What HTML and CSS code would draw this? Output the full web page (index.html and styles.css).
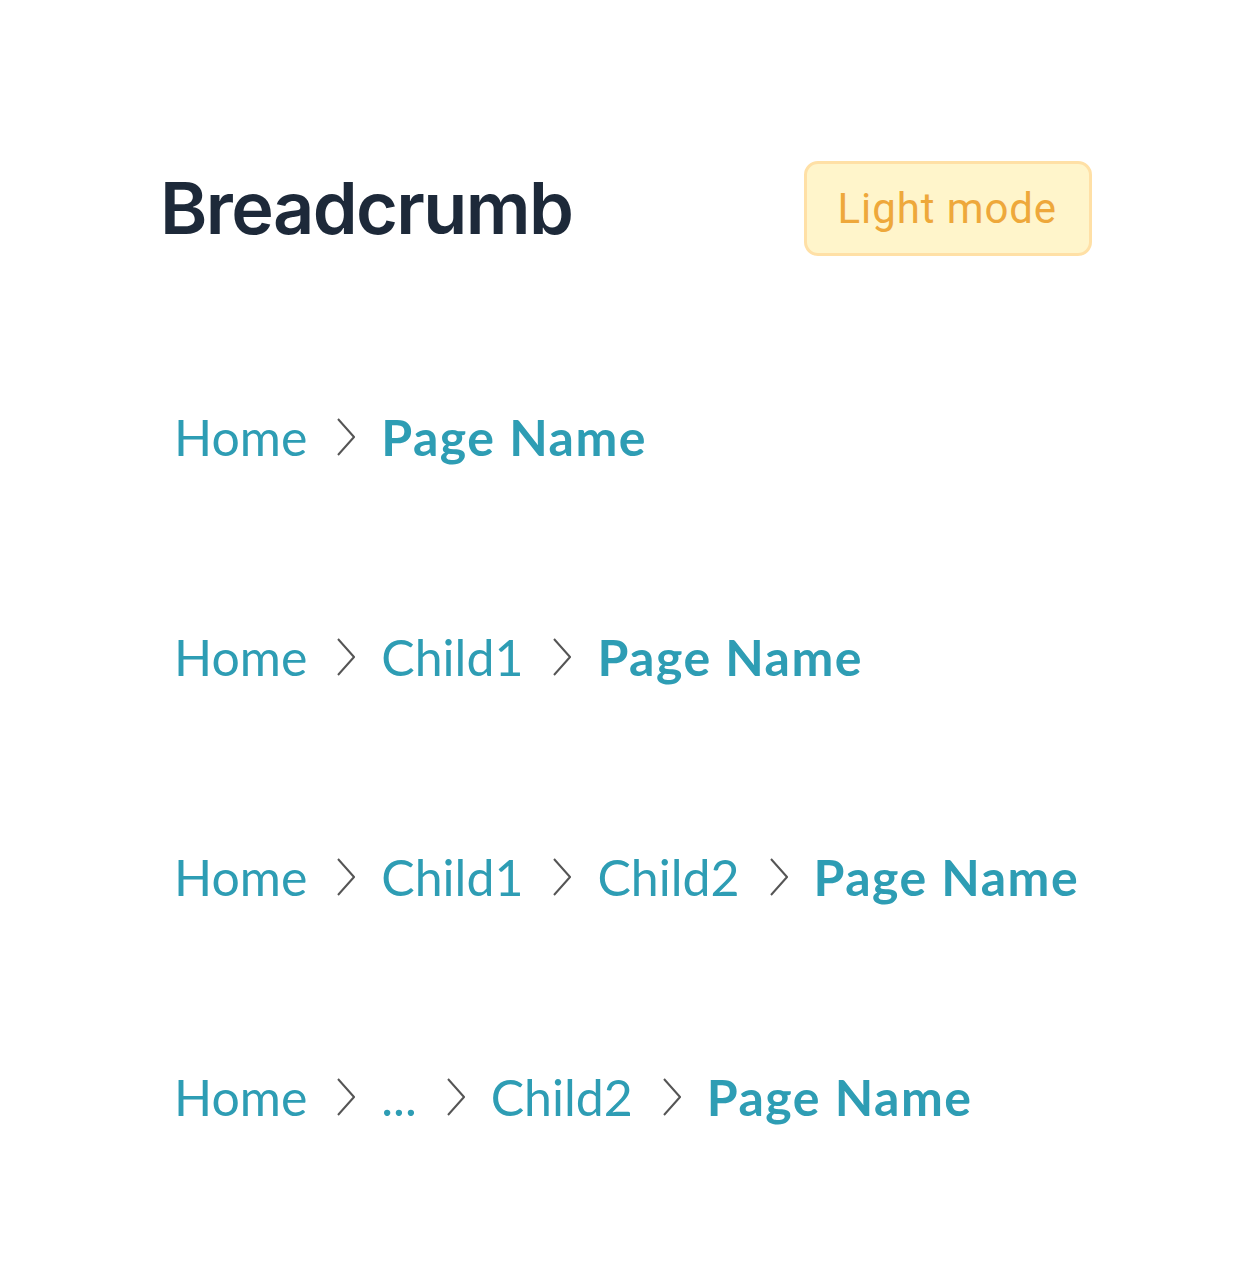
FILE: index.html
```html
<!DOCTYPE html>
<html lang="en">
<head>
	<meta charset="UTF-8">
	<title>Breadcrumb</title>
	<link rel="stylesheet" href="styles.css">
</head>
<body>
	<div class="page">
		<div class="header">
			<h1 class="header_title">Breadcrumb</h1>
			<a href="javascript:;" class="header_mode">Light mode</a>
		</div>

		<div class="crumbs">
			<div class="crumb_row">
				<a href="javascript:;" class="crumb_link">Home</a>
				<span class="crumb_sep"><svg viewBox="0 0 18 38"><path d="M1 1 L17 19 L1 37"/></svg></span>
				<span class="crumb_current">Page Name</span>
			</div>

			<div class="crumb_row">
				<a href="javascript:;" class="crumb_link">Home</a>
				<span class="crumb_sep"><svg viewBox="0 0 18 38"><path d="M1 1 L17 19 L1 37"/></svg></span>
				<a href="javascript:;" class="crumb_link">Child1</a>
				<span class="crumb_sep"><svg viewBox="0 0 18 38"><path d="M1 1 L17 19 L1 37"/></svg></span>
				<span class="crumb_current">Page Name</span>
			</div>

			<div class="crumb_row">
				<a href="javascript:;" class="crumb_link">Home</a>
				<span class="crumb_sep"><svg viewBox="0 0 18 38"><path d="M1 1 L17 19 L1 37"/></svg></span>
				<a href="javascript:;" class="crumb_link">Child1</a>
				<span class="crumb_sep"><svg viewBox="0 0 18 38"><path d="M1 1 L17 19 L1 37"/></svg></span>
				<a href="javascript:;" class="crumb_link">Child2</a>
				<span class="crumb_sep"><svg viewBox="0 0 18 38"><path d="M1 1 L17 19 L1 37"/></svg></span>
				<span class="crumb_current">Page Name</span>
			</div>

			<div class="crumb_row">
				<a href="javascript:;" class="crumb_link">Home</a>
				<span class="crumb_sep"><svg viewBox="0 0 18 38"><path d="M1 1 L17 19 L1 37"/></svg></span>
				<a href="javascript:;" class="crumb_link">...</a>
				<span class="crumb_sep"><svg viewBox="0 0 18 38"><path d="M1 1 L17 19 L1 37"/></svg></span>
				<a href="javascript:;" class="crumb_link">Child2</a>
				<span class="crumb_sep"><svg viewBox="0 0 18 38"><path d="M1 1 L17 19 L1 37"/></svg></span>
				<span class="crumb_current">Page Name</span>
			</div>
		</div>
	</div>
</body>
</html>
```

FILE: styles.css
```css
body {
	margin: 0;
	padding: 0;
	background: #fff;
}

.page {
	width: 932px;
	padding: 160px 0 0 160px;
}

.header {
	display: flex;
	align-items: center;
	justify-content: space-between;
}

.header_title {
	margin: 0;
	font-family: Inter, "Liberation Sans", sans-serif;
	font-weight: 600;
	font-size: 72px;
	letter-spacing: -1.6px;
	line-height: 96px;
	color: #1d2939;
}

.header_mode {
	display: block;
	height: 89px;
	line-height: 89px;
	padding: 0 32px 0 31px;
	border: 3px solid #ffe0a6;
	border-radius: 14px;
	background: #fff5cb;
	color: #eea83b;
	font-family: Roboto, "Liberation Sans", sans-serif;
	font-size: 42px;
	letter-spacing: 0.9px;
	text-decoration: none;
}

.crumbs {
	padding: 71px 0 0 14px;
}

.crumb_row {
	display: flex;
	align-items: center;
	height: 220px;
	font-family: Lato, "Liberation Sans", sans-serif;
	font-size: 50px;
	color: #2e9db4;
}

.crumb_link {
	color: #2e9db4;
	text-decoration: none;
}

.crumb_current {
	font-weight: bold;
	letter-spacing: 1.5px;
}

.crumb_sep {
	display: flex;
	margin: 0 26px 0 30px;
}

.crumb_sep svg {
	width: 18px;
	height: 38px;
	fill: none;
	stroke: #555;
	stroke-width: 2;
}
```
